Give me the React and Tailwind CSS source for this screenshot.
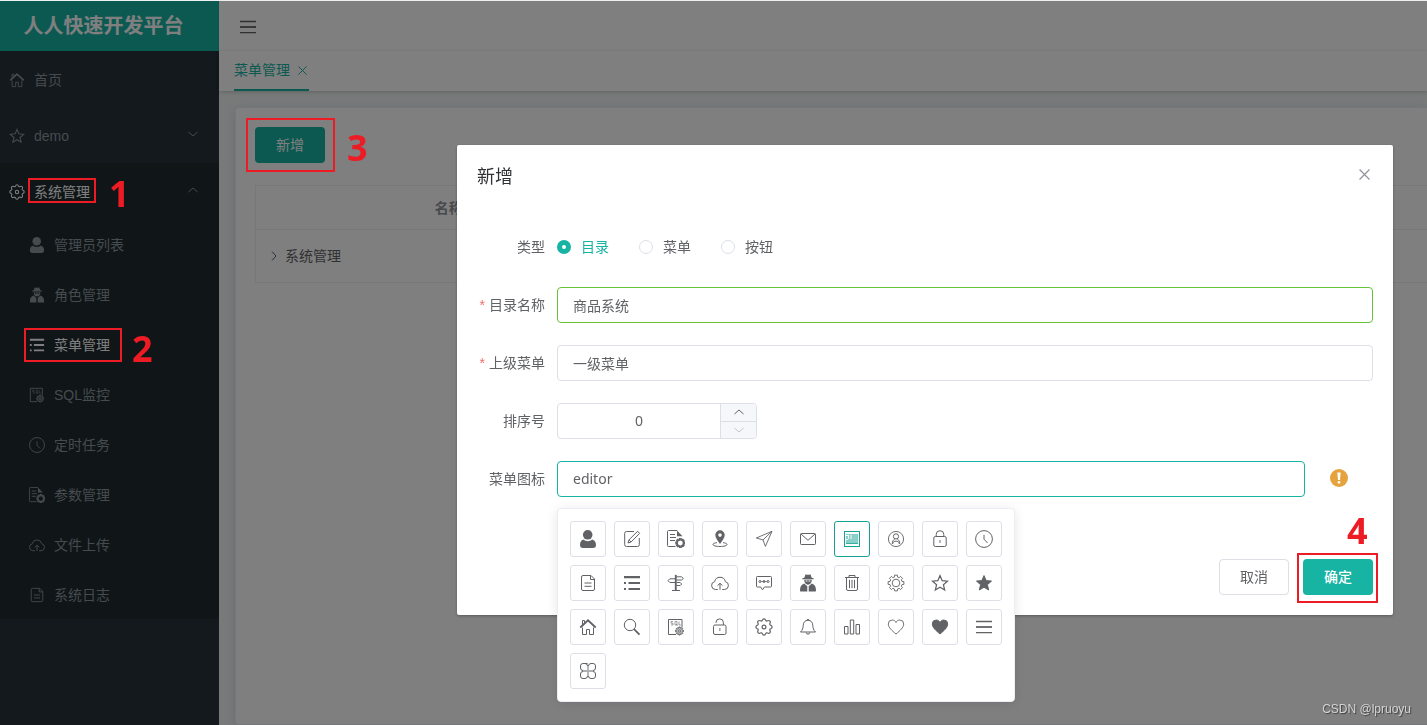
import React, { useState } from 'react';

// Outline of a cog: flat teeth between an outer and an inner radius
const cog = (cx, cy, outer, inner, teeth) => {
  const step = (Math.PI * 2) / teeth;
  const points = [];
  for (let i = 0; i < teeth; i++) {
    const a = i * step - Math.PI / 2;
    [[-0.22, outer], [0.22, outer], [0.32, inner], [0.68, inner]].forEach(([k, r]) => {
      points.push(`${(cx + r * Math.cos(a + k * step)).toFixed(2)} ${(cy + r * Math.sin(a + k * step)).toFixed(2)}`);
    });
  }
  return `M${points.join('L')}Z`;
};

const STAR = 'M9 1.6l2.1 5 5.4.5-4.1 3.6 1.3 5.3L9 13.2 4.3 16l1.3-5.3-4.1-3.6 5.4-.5z';
const HEART = 'M9 16C5 12.600 1.300 9.500 1.300 6A4 4 0 0 1 5.200 2C7 2 8.400 3 9 4.500 9.600 3 11 2 12.800 2A4 4 0 0 1 16.700 6C16.700 9.500 13 12.600 9 16z';
const solid = { fill: 'currentColor', stroke: 'none' };

const icons = {
  admin: (
    <g {...solid}>
      <circle cx="8.7" cy="4.8" r="4.8" />
      <path d="M4.500 9.600C5.700 10.900 7.200 11.200 8.800 11.200s3.100-.3 4.300-1.600c2.600.6 3.900 2.600 3.900 5.400 0 2-1 3-3 3H4c-2 0-3-1-3-3 0-2.800 1-4.800 3.500-5.400z" />
    </g>
  ),
  bianji: (
    <>
      <path d="M11 1.500H3.500a1.800 1.800 0 0 0-1.800 1.800v11.400a1.800 1.800 0 0 0 1.800 1.800h11a1.800 1.800 0 0 0 1.800-1.800V8" />
      <path d="M5 13l1-3.200L14.600 1.300l2 2L8.100 12zM6 9.800L8.100 12" />
    </>
  ),
  config: (
    <>
      <path d="M8.500 16.500h-7a1 1 0 0 1-1-1v-14a1 1 0 0 1 1-1h8.700" />
      <path d="M10 .5l5.500 5.800H10z" {...solid} />
      <path d="M3 4.500h5M3 7.500h6M3 10.500h5" />
      <path d={cog(13.3, 13, 4.4, 3.1, 8)} strokeWidth="1.4" />
    </>
  ),
  dangdifill: (
    <>
      <path d="M9 .3a4.700 4.700 0 0 1 4.700 4.700C13.700 8 11 11 9 14 7 11 4.300 8 4.300 5A4.700 4.700 0 0 1 9 .3zm0 3a1.800 1.800 0 1 0 0 3.600 1.800 1.800 0 0 0 0-3.600z" {...solid} />
      <path d="M6 12.600c-2.300.3-4 1-4 1.900 0 1.200 3.100 2 7 2s7-.8 7-2c0-.9-1.700-1.600-4-1.900" />
    </>
  ),
  daohang: <path d="M17 1.300L1.300 8l6.700 1.900 2.400 6.500zM8 9.900l9-8.600" strokeWidth=".9" />,
  duanxin: (
    <>
      <rect x="1.500" y="3.500" width="15" height="11" rx=".8" />
      <path d="M2 4l7 6.300L16 4" />
    </>
  ),
  editor: (
    <>
      <rect x="1.500" y="1.500" width="15" height="15" />
      <path d="M3 4h12v10H3z" fill="currentColor" stroke="none" opacity=".5" />
      <path d="M3 13.500h12" strokeWidth=".7" />
      <path d="M3 5.500h3M5.500 5v4M8 5v4M3 9.500h2" stroke="#fff" strokeWidth=".9" />
    </>
  ),
  geren: (
    <>
      <circle cx="9" cy="9" r="7.6" strokeWidth=".9" />
      <circle cx="9" cy="6.400" r="2.600" />
      <path d="M5.300 14c0-2.800 1-4.200 2.400-5M12.700 14c0-2.800-1-4.200-2.400-5M6 13.500c.2-1.500 1-2.300 3-2.300s2.800.8 3 2.300" />
    </>
  ),
  lock: (
    <>
      <rect x="2.800" y="6.500" width="12.400" height="10" rx="1.500" />
      <path d="M5.200 6.500V4.500a3.800 3.800 0 0 1 7.600 0v2" />
      <path d="M9 10v3" strokeWidth="1.500" opacity=".6" />
    </>
  ),
  clock: (
    <>
      <circle cx="9" cy="9" r="8.400" />
      <path d="M9 4.800V9.200L12.600 13" />
    </>
  ),
  log: (
    <>
      <path d="M12 1.500H4A1.500 1.500 0 0 0 2.500 3v12A1.500 1.500 0 0 0 4 16.500h10a1.500 1.500 0 0 0 1.500-1.500V5z" />
      <path d="M11.500 1.500V5.500h4" />
      <path d="M5.500 9h7M5.500 12.300h7" />
    </>
  ),
  menu: <path d="M1 2h16v2.300H1zM1 8h2v2H1zM5.500 8H17v2H5.500zM1 14h2v2H1zM5.500 14H17v2H5.500z" {...solid} />,
  mubiao: (
    <>
      <path d="M8 1h1.600v15.500H8z" fill="currentColor" strokeWidth=".3" />
      <path d="M5 16.500h8M9.500 2.800h5L16.400 4.500 14.500 6H9.500M8 4.800H2.800L1 6.700l1.800 1.800H8M9.500 8.500h3.700l1.500 1.500-1.500 1.500H9.500" />
    </>
  ),
  oss: (
    <>
      <path d="M6.800 15.500H4.500a4 4 0 0 1-.8-7.900 5.400 5.400 0 0 1 10.600 0 4 4 0 0 1-.8 7.900h-2.300" />
      <path d="M9 15.800V9.500M6.500 11.600L9 9.300l2.500 2.300" />
    </>
  ),
  pinglun: (
    <>
      <path d="M2.300 2.500h13.400a.8.800 0 0 1 .8.8v8.900a.8.800 0 0 1-.8.8H9.500L7.500 15.800 5.700 13H2.300a.8.800 0 0 1-.8-.8V3.300a.8.800 0 0 1 .8-.8z" />
      <path d="M5.700 7.500h6.600" strokeWidth=".7" />
      <circle cx="5" cy="7.500" r="1" />
      <circle cx="9" cy="7.500" r="1" />
      <circle cx="13" cy="7.500" r="1" />
    </>
  ),
  role: (
    <g {...solid}>
      <path d="M5.500 3.500L6.300.8C7 0 8 .8 9 .8s2-.8 2.700 0l.8 2.700 2.300.9v.8H3.200v-.8z" />
      <path d="M5.200 5.800h7.600c0 3-1.500 4.900-3.800 4.900s-3.800-1.900-3.800-4.900zm1.400.7v1h1.900v-1zm2.900 0v1h1.900v-1z" fillRule="evenodd" />
      <path d="M5.200 9.500L8 12v5.500H2c-.8 0-1-.4-1-1.200 0-3.600 1.500-6 4.200-6.800zM12.800 9.500L10 12v5.500h6c.8 0 1-.4 1-1.200 0-3.600-1.500-6-4.200-6.800z" />
      <path d="M8.400 12h1.200v5.500H8.400z" opacity=".5" />
    </g>
  ),
  shanchu: (
    <>
      <path d="M2 3.500h14M6 3.300V1.500h6v1.800M3.500 3.500V15A1.500 1.500 0 0 0 5 16.500h8a1.500 1.500 0 0 0 1.500-1.500V3.500" />
      <path d="M6.500 5.800v8.400M9 5.800v8.400M11.500 5.800v8.400" />
    </>
  ),
  shezhi: (
    <>
      <path d={cog(9, 9, 8, 6.2, 8)} strokeWidth=".9" />
      <circle cx="9" cy="9" r="3.800" strokeWidth=".9" />
    </>
  ),
  shoucang: <path d={STAR} strokeWidth="1.2" />,
  shoucangfill: <path d={STAR} fill="currentColor" />,
  shouye: (
    <>
      <path d="M1.300 9.500L9 2.300l7.700 7.200" strokeWidth="1.800" />
      <path d="M3.500 9.500v7h4v-5h3v5h4v-7M3.500 7V2.500h2v2.300" />
    </>
  ),
  sousuo: (
    <>
      <circle cx="7" cy="7" r="5.700" />
      <path d="M11 11.200l5.500 5.500" strokeWidth="1.800" />
    </>
  ),
  sql: (
    <>
      <path d="M9 16.500H1.500v-15h13.500v8" />
      <path d="M6 3.500H4v1.700h2V7H4M8 3.500h2V7H8zM9.300 6l1.200 1.500M12 3.500V7h2" strokeWidth=".6" />
      <path d={cog(12.500, 13, 4, 3, 8)} fill="currentColor" fillOpacity=".4" />
      <circle cx="12.500" cy="13" r="1.200" strokeWidth=".7" />
    </>
  ),
  suoding: (
    <>
      <rect x="2.500" y="7" width="12.500" height="9.500" rx="1.500" />
      <path d="M5 5V4.600a3.700 3.700 0 0 1 7.400 0V7" />
      <path d="M8.800 10v3" strokeWidth="1.500" opacity=".6" />
    </>
  ),
  system: (
    <>
      <path
        d="M9 .8c1 0 1.400.5 1.700 1.500.3.900 1 .9 1.800.5 1-.5 1.700-.4 2.300.2s.7 1.300.2 2.300c-.4.8-.3 1.500.6 1.800 1 .3 1.500.9 1.500 1.900s-.5 1.400-1.500 1.700c-.9.3-1 1-.6 1.800.5 1 .4 1.700-.2 2.300s-1.300.7-2.300.2c-.8-.4-1.500-.3-1.800.6-.3 1-.7 1.500-1.700 1.500s-1.400-.5-1.700-1.500c-.3-.9-1-1-1.800-.6-1 .5-1.700.4-2.300-.2s-.7-1.300-.2-2.300c.4-.8.3-1.500-.6-1.800C1.400 10.400.9 10 .9 9s.5-1.600 1.500-1.900c.9-.3 1-1 .6-1.800-.5-1-.4-1.700.2-2.300s1.300-.7 2.300-.2c.8.4 1.500.4 1.800-.5C7.600 1.300 8 .8 9 .8z"
        strokeWidth="1.200"
      />
      <circle cx="9" cy="9" r="1.900" strokeWidth="1.200" />
    </>
  ),
  tixing: (
    <>
      <path d="M1.500 14h15C14.500 12 14 10.500 13.800 7.500 13.600 4 11.800 2.300 9 2.300S4.400 4 4.200 7.500C4 10.500 3.500 12 1.500 14z" />
      <path d="M7.300 14.500a1.700 1.700 0 0 0 3.400 0M8 2.300a1 1 0 0 1 2 0" />
    </>
  ),
  tongji: <path d="M1.500 8.500H5v7.500H1.500zM7.300 2h3.400v14H7.300zM13 6.500h3.500V16H13z" />,
  xihuan: <path d={HEART} strokeWidth=".9" />,
  xihuanfill: <path d={HEART} fill="currentColor" />,
  zhedie: (
    <>
      <path d="M1 3.500h16M1 14.700h16" strokeWidth="1.300" />
      <path d="M1 9h16" strokeWidth="1.800" />
    </>
  ),
  zonghe: (
    <>
      <path d="M8.500 1.500H4A2.500 2.500 0 0 0 1.500 4v2A2.500 2.500 0 0 0 4 8.500M4 9.500A2.500 2.500 0 0 0 1.500 12v2A2.500 2.500 0 0 0 4 16.500h2A2.500 2.500 0 0 0 8.500 14M9.500 14a2.500 2.500 0 0 0 2.500 2.500h2a2.500 2.500 0 0 0 2.500-2.500v-2A2.500 2.500 0 0 0 14 9.500M14 8.500A2.500 2.500 0 0 0 16.500 6V4A2.500 2.500 0 0 0 14 1.500h-2A2.500 2.500 0 0 0 9.500 4M6 1.500A2.500 2.500 0 0 1 8.500 4" />
      <path d="M9 3.500v11M3.500 9h11" strokeWidth="1.800" opacity=".5" />
    </>
  ),
};

const iconNames = Object.keys(icons);

function Icon({ name, className = '' }) {
  return (
    <svg viewBox="0 0 18 18" className={`size-4.5 shrink-0 ${className}`} fill="none" stroke="currentColor" strokeWidth="1" aria-hidden="true">
      {icons[name]}
    </svg>
  );
}

function Chevron({ d, className = '' }) {
  return (
    <svg viewBox="0 0 10 10" className={`size-2.5 shrink-0 ${className}`} fill="none" stroke="currentColor" strokeWidth="1" aria-hidden="true">
      <path d={d} />
    </svg>
  );
}

const UP = 'M.5 7L5 3l4.500 4';
const DOWN = 'M.5 3L5 7l4.500-4';
const RIGHT = 'M3 .5L7 5 3 9.500';

function Cross({ className }) {
  return (
    <svg viewBox="0 0 10 10" className={className} fill="none" stroke="currentColor" strokeWidth="1.100" aria-hidden="true">
      <path d="M.5.5l9 9M9.500.5l-9 9" />
    </svg>
  );
}

// Red step frame with its number, laid over the control it wraps
function Frame({ className }) {
  return <span className={`pointer-events-none absolute z-30 border-2 border-[#ed1c24] ${className}`} />;
}

function Step({ n, className }) {
  return (
    <span className={`pointer-events-none absolute z-30 font-['Open_Sans','Noto_Sans',sans-serif] text-4xl leading-9 font-bold text-[#ed1c24] ${className}`}>
      {n}
    </span>
  );
}

const subMenu = [
  { icon: 'admin', label: '管理员列表' },
  { icon: 'role', label: '角色管理' },
  { icon: 'menu', label: '菜单管理', active: true },
  { icon: 'sql', label: 'SQL监控' },
  { icon: 'clock', label: '定时任务' },
  { icon: 'config', label: '参数管理' },
  { icon: 'oss', label: '文件上传' },
  { icon: 'log', label: '系统日志' },
];

function Sidebar() {
  return (
    <aside className="w-[219px] shrink-0 bg-[#263238] text-[#8a979e]">
      <h1 className="flex h-[50px] items-center justify-center bg-[#17b3a3] pr-3 text-xl font-bold text-white">
        人人快速开发平台
      </h1>
      <nav>
        <a href="#home" className="flex h-14 items-center gap-2 pl-2 pt-px">
          <Icon name="shouye" className="p-px" />
          首页
        </a>
        <a href="#demo" className="flex h-14 items-center gap-2 pr-[21px] pl-2 pt-px">
          <Icon name="shoucang" className="p-px" />
          <span className="flex-1">demo</span>
          <Chevron d={DOWN} className="mb-1" />
        </a>
        <div className="bg-[#202a2f]">
          <a href="#system" className="flex h-14 items-center gap-2 pr-[21px] pl-2 pt-px text-white">
            <Icon name="system" className="p-px" />
            <span className="relative">
              系统管理
              <Frame className="-inset-x-1.5 -top-1 -bottom-px" />
              <Step n="1" className="-top-1.5 left-[75px]" />
            </span>
            <Chevron d={UP} className="mb-1 ml-auto text-[#8a979e]" />
          </a>
          {subMenu.map((item) => (
            <a
              key={item.label}
              href="#menu"
              className={`flex h-[50px] items-center gap-2 pl-7 pt-px ${item.active ? 'text-white' : ''}`}
            >
              <Icon name={item.icon} className="p-px" />
              <span className="relative">
                {item.label}
                {item.active && (
                  <>
                    <Frame className="-inset-y-[7px] -right-3 -left-[30px]" />
                    <Step n="2" className="-top-1 left-[78px]" />
                  </>
                )}
              </span>
            </a>
          ))}
        </div>
      </nav>
    </aside>
  );
}

function Page() {
  return (
    <div className="flex min-w-0 flex-1 flex-col bg-[#f1f4f5]">
      <header className="flex h-[50px] shrink-0 items-center bg-white pt-0.5 pl-5 shadow-[0_1px_2px_rgba(0,0,0,0.12)]">
        <button type="button" aria-label="折叠菜单" className="text-[#606266]">
          <Icon name="zhedie" />
        </button>
      </header>
      <div className="flex h-10 shrink-0 bg-white pl-[15px] shadow-[0_1px_4px_rgba(0,0,0,0.2)]">
        <div className="flex items-center gap-2 border-b-2 border-[#17b3a3] pr-0.5 text-[#17b3a3]">
          <a href="#menu">菜单管理</a>
          <button type="button" aria-label="关闭标签">
            <Cross className="size-[9px]" />
          </button>
        </div>
      </div>
      <main className="flex flex-1 pt-4 pl-4">
        <section className="flex-1 overflow-hidden rounded-l border border-r-0 border-[#ebeef5] bg-white pt-[19px] pl-[19px] shadow-[0_2px_12px_rgba(0,0,0,0.1)]">
          <div className="relative w-fit">
            <button type="button" className="block h-9 w-[70px] rounded bg-[#17b3a3] text-sm text-white">
              新增
            </button>
            <Frame className="-inset-y-[9px] -right-2.5 -left-[9px]" />
            <Step n="3" className="top-[3px] left-[92px]" />
          </div>
          <table className="mt-[22px] w-[1350px] table-fixed border-collapse border border-[#ebeef5] text-[#606266]">
            <thead>
              <tr className="h-11 border-b border-[#ebeef5] text-[#909399]">
                <th className="w-[386px] font-bold">名称</th>
                <th className="w-[733px]" />
                <th className="font-bold">菜单URL</th>
              </tr>
            </thead>
            <tbody>
              <tr className="h-[53px]">
                <td className="pl-[13px]">
                  <span className="flex items-center gap-1.5">
                    <Chevron d={RIGHT} />
                    系统管理
                  </span>
                </td>
                <td />
                <td />
              </tr>
            </tbody>
          </table>
        </section>
      </main>
    </div>
  );
}

const inputClass = 'h-9 w-full rounded border bg-white px-[15px] text-sm text-[#606266] outline-none';

function FormItem({ label, htmlFor, required, children }) {
  return (
    <div className="mb-[22px] flex">
      <label htmlFor={htmlFor} className="w-20 shrink-0 pr-3 text-right leading-9 whitespace-nowrap">
        {required && <span className="mr-1 text-[#f56c6c]">*</span>}
        {label}
      </label>
      <div className="relative flex min-w-0 flex-1 items-center">{children}</div>
    </div>
  );
}

function IconPicker({ value, onChange }) {
  return (
    <div className="absolute top-[47px] left-0 z-20 flex w-[458px] flex-wrap gap-2 rounded border border-[#ebeef5] bg-white p-3 shadow-[0_2px_12px_rgba(0,0,0,0.1)]">
      {iconNames.map((name) => (
        <button
          key={name}
          type="button"
          aria-label={name}
          onClick={() => onChange(name)}
          className={`flex size-9 items-center justify-center rounded-[3px] border ${name === value ? 'border-[#15a193] text-[#15a193]' : 'border-[#dcdfe6] text-[#606266]'}`}
        >
          <Icon name={name} />
        </button>
      ))}
    </div>
  );
}

function MenuDialog() {
  const [type, setType] = useState('目录');
  const [name, setName] = useState('商品系统');
  const [order, setOrder] = useState(0);
  const [icon, setIcon] = useState('editor');

  return (
    <div className="fixed inset-0 z-20 pt-[145px] pr-[34px] pl-[457px]">
      <div role="dialog" aria-labelledby="dialog-title" className="rounded-xs bg-white text-[#606266] shadow-[0_1px_3px_rgba(0,0,0,0.3)]">
        <div className="flex justify-between px-5 pt-5 pb-2.5">
          <h2 id="dialog-title" className="text-lg leading-6 text-[#303133]">新增</h2>
          <button type="button" aria-label="关闭" className="mr-[3px] mb-1.5 text-[#909399]">
            <Cross className="size-[11px]" />
          </button>
        </div>
        <form className="px-5 pt-[30px] pb-[30px]" onSubmit={(e) => e.preventDefault()}>
          <FormItem label="类型" htmlFor="type-目录">
            <div className="flex gap-[30px]">
              {['目录', '菜单', '按钮'].map((t) => (
                <label key={t} className={`flex items-center gap-2.5 ${t === type ? 'text-[#17b3a3]' : ''}`}>
                  <input
                    id={`type-${t}`}
                    type="radio"
                    name="type"
                    checked={t === type}
                    onChange={() => setType(t)}
                    className="size-3.5 appearance-none rounded-full border border-[#dcdfe6] bg-white checked:border-5 checked:border-[#17b3a3]"
                  />
                  {t}
                </label>
              ))}
            </div>
          </FormItem>
          <FormItem label="目录名称" htmlFor="name" required>
            <input id="name" value={name} onChange={(e) => setName(e.target.value)} className={`${inputClass} border-[#67c23a]`} />
          </FormItem>
          <FormItem label="上级菜单" htmlFor="parent" required>
            <input id="parent" readOnly value="一级菜单" className={`${inputClass} border-[#dcdfe6]`} />
          </FormItem>
          <FormItem label="排序号" htmlFor="order">
            <div className="flex h-9 w-[200px] overflow-hidden rounded border border-[#dcdfe6]">
              <input
                id="order"
                inputMode="numeric"
                value={order}
                onChange={(e) => setOrder(Number(e.target.value) || 0)}
                className="min-w-0 flex-1 text-center font-['Noto_Sans',sans-serif] text-sm outline-none"
              />
              <div className="flex w-9 flex-col border-l border-[#dcdfe6] bg-[#f5f7fa]">
                <button type="button" aria-label="增加" onClick={() => setOrder(order + 1)} className="flex flex-1 items-center justify-center border-b border-[#dcdfe6]">
                  <Chevron d={UP} />
                </button>
                <button type="button" aria-label="减少" onClick={() => setOrder(Math.max(0, order - 1))} className="flex flex-1 items-center justify-center text-[#c0c4cc]">
                  <Chevron d={DOWN} />
                </button>
              </div>
            </div>
          </FormItem>
          <FormItem label="菜单图标" htmlFor="icon">
            <input
              id="icon"
              value={icon}
              onChange={(e) => setIcon(e.target.value)}
              className={`${inputClass} border-[#17b3a3] pb-0.5 font-['Noto_Sans',sans-serif]`}
            />
            <span className="flex w-[68px] shrink-0 justify-center pb-0.5">
              <svg viewBox="0 0 18 18" className="size-4.5" aria-hidden="true">
                <circle cx="9" cy="9" r="9" fill="#e6a23c" />
                <path d="M7.300 3.500h3.400L10 11H8z" fill="#fff" />
                <circle cx="9" cy="13.300" r="1.400" fill="#fff" />
              </svg>
            </span>
            <IconPicker value={icon} onChange={setIcon} />
          </FormItem>
        </form>
        <div className="flex justify-end gap-3.5 px-5 pt-2.5 pb-5">
          <button type="button" className="h-9 w-[70px] rounded border border-[#dcdfe6]">取消</button>
          <div className="relative">
            <button type="button" className="block h-9 w-[70px] rounded bg-[#17b3a3] font-medium text-white">确定</button>
            <Frame className="-top-1.5 -right-[5px] -bottom-2 -left-1.5" />
            <Step n="4" className="-top-[46px] left-11" />
          </div>
        </div>
      </div>
    </div>
  );
}

function App() {
  return (
    <div className="min-h-screen border-t border-[#eef1f1] font-['Liberation_Sans','Noto_Sans_CJK_SC',sans-serif] text-sm">
      <div className="flex min-h-[calc(100vh-1px)]">
        <Sidebar />
        <Page />
      </div>
      <div className="fixed inset-0 top-px z-10 bg-black/50" />
      <MenuDialog />
      <span className="fixed right-4 bottom-2 z-30 text-xs text-[#d4d4d4] [text-shadow:1px_1px_1px_rgba(0,0,0,0.5)]">CSDN @lpruoyu</span>
    </div>
  );
}

export default App;
